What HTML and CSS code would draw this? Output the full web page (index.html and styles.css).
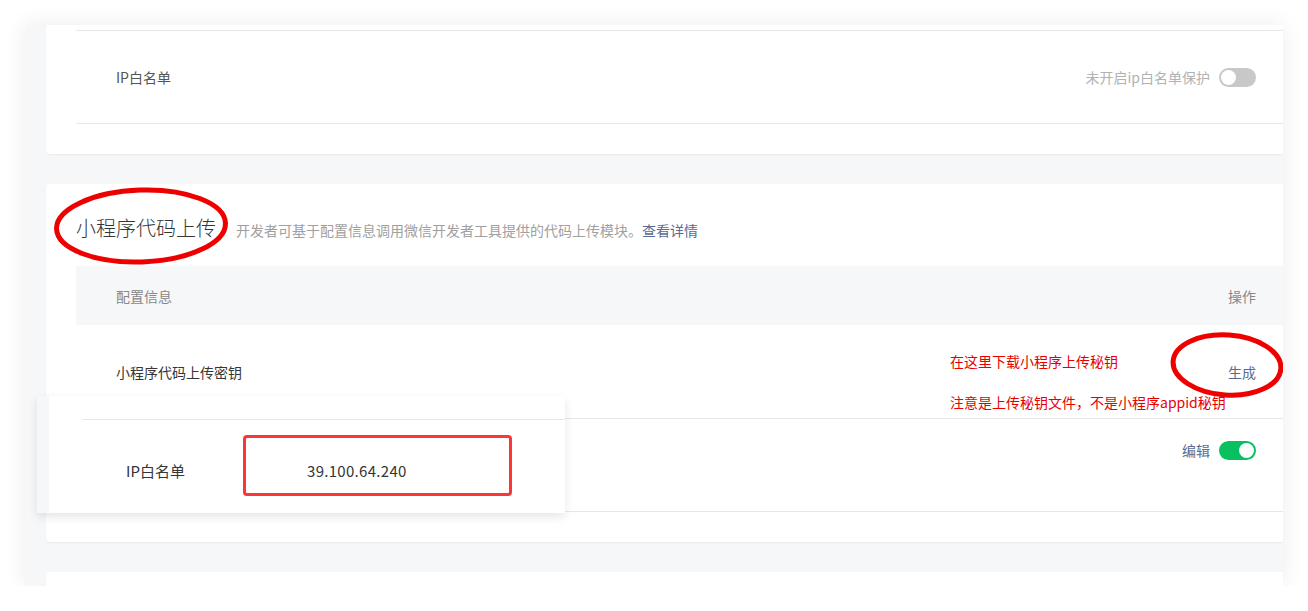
FILE: index.html
```html
<!DOCTYPE html>
<html lang="zh-CN">
<head>
<meta charset="utf-8">
<title>小程序代码上传</title>
<link rel="stylesheet" href="styles.css">
</head>
<body>
<div class="shot">
  <section class="card card-top">
    <div class="row row-top">
      <span class="label label-soft">IP白名单</span>
      <div class="row-right">
        <span class="hint">未开启ip白名单保护</span>
        <span class="switch switch-off"><span class="knob"></span></span>
      </div>
    </div>
  </section>

  <section class="card card-main">
    <div class="title-bar">
      <h2 class="title">小程序代码上传</h2>
      <p class="desc">开发者可基于配置信息调用微信开发者工具提供的代码上传模块。<a class="link">查看详情</a></p>
    </div>
    <div class="thead">
      <span>配置信息</span>
      <span>操作</span>
    </div>
    <div class="row">
      <span class="label">小程序代码上传密钥</span>
      <a class="link">生成</a>
    </div>
    <div class="row row-ip">
      <span class="label"></span>
      <div class="row-right">
        <a class="link">编辑</a>
        <span class="switch switch-on"><span class="knob"></span></span>
      </div>
    </div>
  </section>

  <section class="card card-next"></section>

  <div class="paste">
    <div class="paste-body">
      <div class="paste-row">
        <span class="paste-label">IP白名单</span>
        <div class="ip-box"><span class="ip">39.100.64.240</span></div>
      </div>
    </div>
  </div>

  <svg class="marks" width="1258" height="561" viewBox="0 0 1258 561">
    <ellipse cx="116" cy="201" rx="84.5" ry="36" fill="none" stroke="#ee0000" stroke-width="5" transform="rotate(-2 116 201)"/>
    <ellipse cx="1202" cy="340" rx="54" ry="30" fill="none" stroke="#ee0000" stroke-width="5" transform="rotate(4 1202 340)"/>
  </svg>

  <p class="note note-1">在这里下载小程序上传秘钥</p>
  <p class="note note-2">注意是上传秘钥文件，不是小程序appid秘钥</p>
</div>
</body>
</html>
```

FILE: styles.css
```css
* { box-sizing: border-box; }

html, body {
  margin: 0;
  padding: 0;
  background: #ffffff;
}

body {
  font-family: "Noto Sans CJK SC", "Noto Sans", sans-serif;
  font-size: 14px;
  color: #353535;
}

.shot {
  position: relative;
  margin: 25px 0 0 25px;
  width: 1258px;
  height: 561px;
  padding-left: 21px;
  background: #f6f7f8;
  box-shadow: 0 0 22px rgba(0, 0, 0, 0.08);
  overflow: hidden;
  display: flex;
  flex-direction: column;
  gap: 30px;
}

.card {
  background: #ffffff;
  padding-left: 30px;
  border-radius: 0 0 0 4px;
  box-shadow: 0 1px 2px rgba(0, 0, 0, 0.06);
  flex: none;
}

.card-top {
  height: 129px;
  padding-top: 5px;
}

.card-main {
  height: 358px;
  border-radius: 4px 0 0 4px;
}

.card-next {
  height: 40px;
  border-radius: 4px 0 0 0;
}

.row {
  display: flex;
  align-items: center;
  justify-content: space-between;
  height: 94px;
  padding: 0 27px 0 40px;
  border-bottom: 1px solid #e7e7eb;
}

.row-top {
  border-top: 1px solid #e7e7eb;
}

.row-ip {
  height: 93px;
  align-items: flex-start;
  padding-top: 21px;
}

.label {
  line-height: 20px;
}

.label-soft {
  color: #555555;
}

.row-right {
  display: flex;
  align-items: center;
  gap: 9px;
  line-height: 20px;
}

.hint {
  color: #b2b2b2;
}

.link {
  color: #576b95;
  text-decoration: none;
  line-height: 20px;
}

.switch {
  display: flex;
  align-items: center;
  width: 37px;
  height: 19px;
  border-radius: 10px;
  padding: 2px;
}

.switch .knob {
  width: 15px;
  height: 15px;
  border-radius: 50%;
  background: #ffffff;
}

.switch-off {
  background: #c8c8c8;
  justify-content: flex-start;
}

.switch-on {
  background: #07c160;
  justify-content: flex-end;
}

.title-bar {
  display: flex;
  align-items: baseline;
  gap: 20px;
  height: 82px;
  padding-top: 30px;
}

.title {
  margin: 0;
  font-size: 20px;
  font-weight: 300;
  line-height: 28px;
  color: #353535;
}

.desc {
  margin: 0;
  font-size: 14px;
  color: #a0a0a0;
}

.thead {
  display: flex;
  align-items: center;
  justify-content: space-between;
  height: 59px;
  padding: 0 27px 0 40px;
  background: #f6f7f8;
  color: #888888;
}

/* pasted screenshot fragment lying over the page */
.paste {
  position: absolute;
  left: 12px;
  top: 371px;
  width: 528px;
  height: 117px;
  padding-left: 12px;
  background: #f6f7f8;
  box-shadow: 0 4px 9px rgba(0, 0, 0, 0.1);
}

.paste-body {
  height: 100%;
  background: #ffffff;
  padding: 23px 0 0 33px;
}

.paste-row {
  display: flex;
  align-items: flex-start;
  border-top: 1px solid #e7e7eb;
  padding: 15px 0 0 44px;
  height: 100%;
}

.paste-label {
  font-size: 15px;
  line-height: 20px;
  margin-top: 26px;
  width: 117px;
  color: #353535;
}

.ip-box {
  display: flex;
  align-items: center;
  width: 269px;
  height: 61px;
  border: 3px solid #fb3636;
  border-radius: 4px;
  padding: 11px 0 0 61px;
}

.ip {
  font-size: 15px;
  line-height: 20px;
  letter-spacing: 0.3px;
  color: #353535;
}

.marks {
  position: absolute;
  left: 0;
  top: 0;
  pointer-events: none;
}

.note {
  position: absolute;
  left: 925px;
  margin: 0;
  font-size: 14px;
  line-height: 20px;
  color: #e80000;
  white-space: nowrap;
}

.note-1 { top: 326px; }
.note-2 { top: 367px; }
```
